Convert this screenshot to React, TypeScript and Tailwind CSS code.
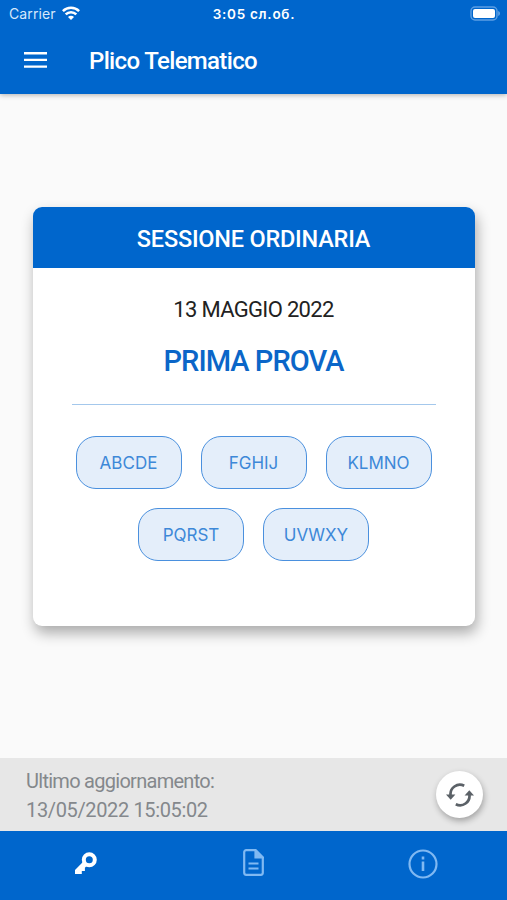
const rows = [
  ['ABCDE', 'FGHIJ', 'KLMNO'],
  ['PQRST', 'UVWXY'],
]

function StatusBar() {
  return (
    <div className="grid h-7 grid-cols-[1fr_auto_1fr] items-center pl-[9px] pr-[6px] font-['Inter',sans-serif] text-white">
      <div className="flex items-center gap-[6px]">
        <span className="text-[14px] leading-none tracking-[0.1px] text-[#d6e8fb]">Carrier</span>
        <svg className="-mt-[3px]" width="18" height="14" viewBox="0 0 18 14" fill="none" stroke="white" strokeWidth="2.5">
          <path d="M0.9 5.2a11.5 11.5 0 0 1 16.2 0" />
          <path d="M3.7 8.4a7.4 7.4 0 0 1 10.6 0" />
          <path d="M9 14 6 10.9a4.2 4.2 0 0 1 6 0Z" fill="white" stroke="none" />
        </svg>
      </div>
      <span className="-ml-[2px] pt-[2px] text-[13.5px] font-semibold leading-none tracking-[0.72px]">3:05 сл.об.</span>
      <svg className="-mt-[2px] justify-self-end" width="31" height="15" viewBox="0 0 31 15">
        <rect x="1" y="1" width="26" height="13" rx="4" fill="none" stroke="#5c9fe3" strokeWidth="1.4" />
        <rect x="3" y="3" width="22" height="9" rx="2" fill="white" />
        <path d="M28.4 5v5c1.8-.8 1.8-4.2 0-5Z" fill="#7fb5ec" />
      </svg>
    </div>
  )
}

function Header() {
  return (
    <header className="z-10 h-[94px] bg-[#0066cc] text-white shadow-[0_1px_5px_rgba(0,0,0,0.3)]">
      <StatusBar />
      <div className="flex h-[66px] items-center pl-6">
        <svg className="-mt-[2px]" width="23" height="16" viewBox="0 0 23 16" fill="white">
          <path d="M0 0h23v2.4H0zM0 6.7h23v2.4H0zM0 13.4h23v2.4H0z" />
        </svg>
        <h1 className="ml-[42px] text-[24px] font-medium leading-none tracking-[-0.66px]">Plico Telematico</h1>
      </div>
    </header>
  )
}

function SessionCard() {
  return (
    <section className="h-[419px] w-[442px] rounded-[9px] bg-white text-center shadow-[2px_7px_14px_rgba(0,0,0,0.32)]">
      <h2 className="flex h-[61px] items-center justify-center rounded-t-[9px] bg-[#0066cc] pt-1 text-[23.5px] font-medium leading-none tracking-[-0.22px] text-white">
        SESSIONE ORDINARIA
      </h2>
      <p className="mt-[30px] text-[22px] leading-6 tracking-[-0.68px] text-[#222]">13 MAGGIO 2022</p>
      <p className="mt-[23px] text-[29px] font-medium leading-8 tracking-[-0.95px] text-[#0b66c8]">PRIMA PROVA</p>
      <hr className="mx-[39px] mt-[27px] border-t-[1px] border-[#a4c8ec]" />
      <div className="mt-[31px] flex flex-col gap-[19px]">
        {rows.map((row) => (
          <div key={row[0]} className="flex justify-center gap-[19px]">
            {row.map((code) => (
              <button
                key={code}
                className="h-[53px] w-[106px] rounded-[20px] border-[1.4px] border-[#4a90de] bg-[#e4eefa] pt-[2px] font-['Inter',sans-serif] text-[17px] text-[#3d88d8]"
              >
                {code}
              </button>
            ))}
          </div>
        ))}
      </div>
    </section>
  )
}

function UpdateBar() {
  return (
    <div className="flex h-[73px] items-center justify-between bg-[#e7e7e7] pl-[26px] pr-6">
      <p className="pt-[3px] text-[20px] leading-[29px] text-[#84888c]">
        <span className="block tracking-[-0.72px]">Ultimo aggiornamento:</span>
        <span className="block tracking-[-0.36px]">13/05/2022 15:05:02</span>
      </p>
      <button className="flex size-[47px] items-center justify-center rounded-full bg-white shadow-[1px_3px_6px_rgba(0,0,0,0.3)]">
        <svg width="28" height="24" viewBox="0 0 28 24" fill="none" stroke="#5b6167" strokeWidth="2.7">
          <path d="M18.2 2.8A9.4 9.4 0 0 0 4.6 12.5" />
          <path d="M9.8 21.2A9.4 9.4 0 0 0 23.4 11.5" />
          <path d="M0 11.6h9.4l-4.7 5.2z" fill="#5b6167" stroke="none" />
          <path d="M28 12.4h-9.4l4.7-5.2z" fill="#5b6167" stroke="none" />
        </svg>
      </button>
    </div>
  )
}

function TabBar() {
  return (
    <nav className="grid h-[69px] grid-cols-3 bg-[#0066cc]">
      <button className="flex items-start justify-center pl-[3px] pt-[21px]">
        <svg width="22" height="22" viewBox="0 0 22 22" fill="none">
          <circle cx="14.3" cy="7.7" r="5.5" stroke="white" strokeWidth="4" />
          <path d="M8.4 9.5 0 18V22h6.8v-3h3.1v-3.2l3-3Z" fill="white" />
        </svg>
      </button>
      <button className="flex items-start justify-center pt-[18px]">
        <svg width="21" height="27" viewBox="0 0 21 27" fill="none" stroke="#80b9f2" strokeWidth="2.2">
          <path d="M12.5 1.2H3.2a2 2 0 0 0-2 2v20.6a2 2 0 0 0 2 2h14.6a2 2 0 0 0 2-2V8.5Z" />
          <path d="M12.5 1.2v7.3h7.3Z" fill="#80b9f2" />
          <path d="M5.5 14.5h10M5.5 19.5h10" />
        </svg>
      </button>
      <button className="flex items-start justify-center pt-[18px]">
        <svg width="30" height="30" viewBox="0 0 30 30" fill="none" stroke="#80b9f2" strokeWidth="2.2">
          <circle cx="15" cy="15" r="13.5" />
          <path d="M15 12.6V22M15 7.5v3" strokeWidth="2.6" />
        </svg>
      </button>
    </nav>
  )
}

export default function App() {
  return (
    <div className="flex h-[900px] w-[507px] flex-col overflow-hidden bg-[#fafafa] font-['Roboto',sans-serif]">
      <Header />
      <main className="flex flex-1 justify-center pt-[113px]">
        <SessionCard />
      </main>
      <UpdateBar />
      <TabBar />
    </div>
  )
}
